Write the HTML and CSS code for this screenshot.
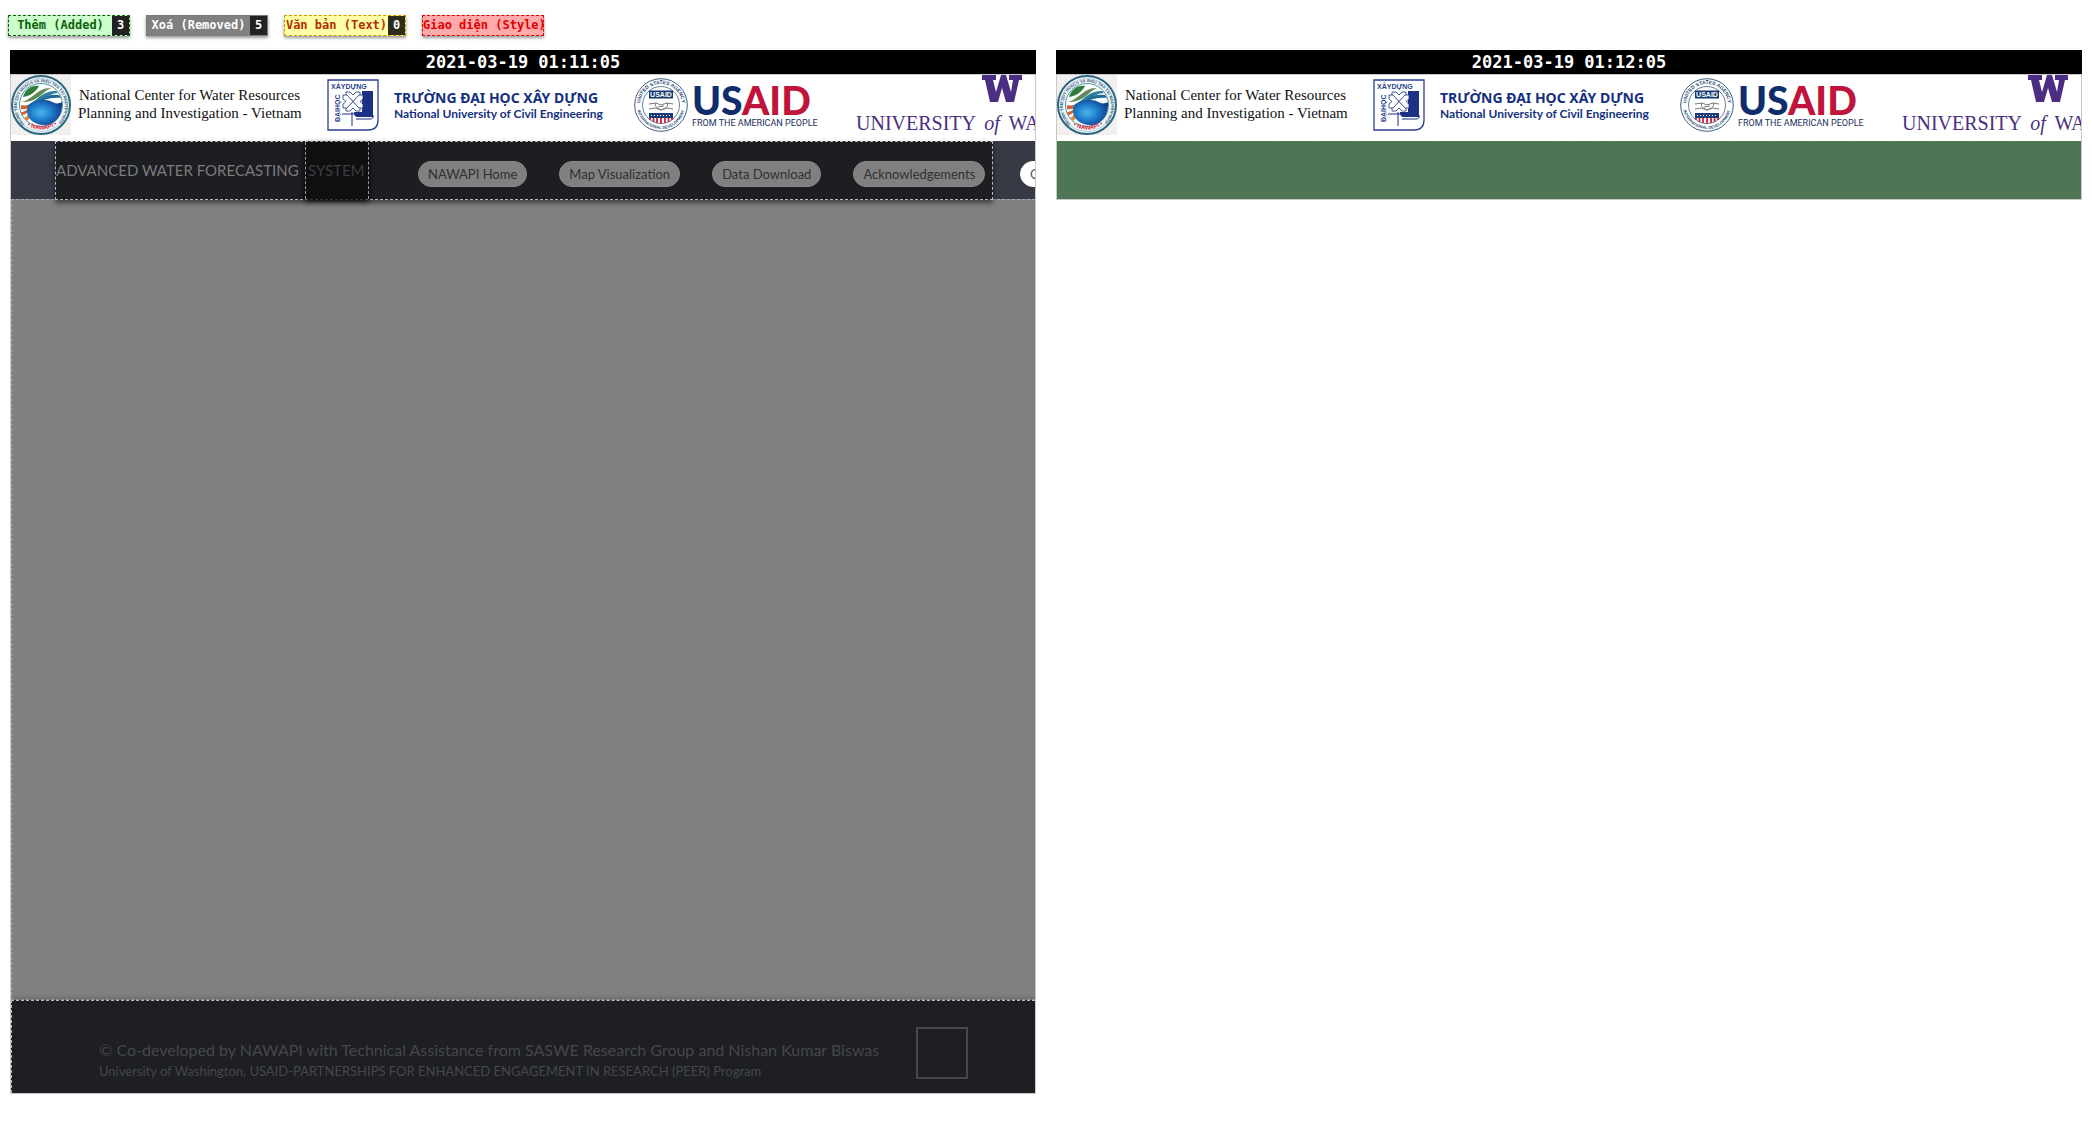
FILE: index.html
```html
<!DOCTYPE html>
<html lang="vi">
<head>
<meta charset="utf-8">
<title>2021-03-19 01:11:05 / 2021-03-19 01:12:05</title>
<link rel="stylesheet" href="styles.css">
</head>
<body>
<div class="legend">
  <button class="tag added"><span class="tag-label">Thêm (Added)</span><span class="count">3</span></button>
  <button class="tag removed"><span class="tag-label">Xoá (Removed)</span><span class="count">5</span></button>
  <button class="tag text"><span class="tag-label">Văn bản (Text)</span><span class="count">0</span></button>
  <button class="tag style"><span class="tag-label">Giao diện (Style)</span></button>
</div>

<main class="compare">
  <section class="pane">
    <h2 class="stamp">2021-03-19 01:11:05</h2>
    <div class="frame">
      <header class="banner">
        <svg class="logo-nawapi" viewBox="0 0 60 60">
          <defs>
            <radialGradient id="ball" cx="40%" cy="50%" r="60%">
              <stop offset="0" stop-color="#4ab4ea"/><stop offset=".5" stop-color="#1f7fcb"/><stop offset="1" stop-color="#123f92"/>
            </radialGradient>
            <path id="nawapiArc" d="M14 49 A24 24 0 1 1 47 48"/>
            <path id="nawapiLow" d="M14 49 A27 27 0 0 0 48 48"/>
          </defs>
          <g id="nawapi">
            <rect width="60" height="60" fill="#f4efef"/>
            <circle cx="30" cy="30" r="29" fill="#eef6f8" stroke="#2b6780" stroke-width="2"/>
            <circle cx="30" cy="30" r="26.5" fill="none" stroke="#8fb6c4" stroke-width=".6"/>
            <circle cx="30" cy="30" r="21.5" fill="#fff" stroke="#4d95a8" stroke-width="1"/>
            <text class="seal-text" fill="#3c5577"><textPath href="#nawapiArc">TRUNG TÂM QUY HOẠCH VÀ ĐIỀU TRA TÀI NGUYÊN NƯỚC QUỐC GIA</textPath></text>
            <text class="seal-name" fill="#d8283c"><textPath href="#nawapiLow" startOffset="50%" text-anchor="middle">• NAWAPI •</textPath></text>
            <path d="M12 22C14 15 20 10 28 11C25 17 19 21 12 22Z" fill="#2f7d3b"/>
            <path d="M10 27C20 26 27 12 40 13C33 15 27 28 10 27Z" fill="#5f8a55"/>
            <path d="M11 31C24 31 29 15 45 16L47 18C35 18 29 33 11 31Z" fill="#2c7da0"/>
            <path d="M20 29C28 27 34 18 48 20L50 23C38 22 32 26 20 29Z" fill="#1f6c94"/>
            <path d="M10 30C14 31 18 31 22 30C18 34 13 35 10 34Z" fill="#d2642f"/>
            <path d="M10 37C13 37 16 35 18 33L17 37C15 39 13 40 11 40Z" fill="#d2642f"/>
            <path d="M13 43C15 42 16 41 17 39L19 43L16 46Z" fill="#e08b3c"/>
            <path d="M16 34C17 27 26 25 34 25C42 25 43 31 51 27C52 43 42 50 33 50C23 50 15 43 16 34Z" fill="url(#ball)"/>
          </g>
        </svg>
        <p class="center-name">National Center for Water Resources<br>Planning and Investigation - Vietnam</p>
        <svg class="logo-nuce" viewBox="0 0 52 52">
          <g id="nuce">
            <path d="M1 1H51V41Q51 51 41 51H1Z" fill="#fff" stroke="#2a3f92" stroke-width="1.3"/>
            <path d="M27 12H46V38H31C28 38 27 36 27 33Z" fill="#1b3184"/>
            <path d="M15 35H30M25 23V47M29 40H43Q47 40 46 36" fill="none" stroke="#1b3184" stroke-width="1"/>
            <path d="M17 12H35V33H17Z" fill="#fff"/>
            <g fill="#fff" stroke="#1b3184" stroke-width=".8">
              <path d="M26 22.500L19 16V13H23L26 16L29 13H33V16Z"/>
              <path d="M26 22.500L19 29V32H23L26 29L29 32H33V29Z"/>
              <path d="M26 22.500L20 16H16V20L19 22.500L16 25V29H20Z"/>
              <path d="M26 22.500L32 16H36V20L33 22.500L36 25V29H32Z"/>
            </g>
            <text class="nuce-text" x="4" y="10" fill="#2a3f92">XÂYDỰNG</text>
            <text class="nuce-text" transform="translate(13 43) rotate(-90)" fill="#2a3f92">ĐẠIHỌC</text>
          </g>
        </svg>
        <p class="nuce-name"><b>TRƯỜNG ĐẠI HỌC XÂY DỰNG</b><span>National University of Civil Engineering</span></p>
        <svg class="logo-seal" viewBox="0 0 54 54">
          <defs>
            <path id="usArc" d="M6 27 A21 21 0 0 1 48 27"/>
            <path id="usLow" d="M3 27 A24 24 0 0 0 51 27"/>
          </defs>
          <g id="seal">
            <circle cx="27" cy="27" r="26.3" fill="#fff" stroke="#3d5f86" stroke-width="1"/>
            <circle cx="27" cy="27" r="18.5" fill="#fff" stroke="#3d5f86" stroke-width=".8"/>
            <text class="us-text" fill="#2d4b78"><textPath href="#usArc" startOffset="50%" text-anchor="middle">UNITED STATES AGENCY</textPath></text>
            <text class="us-low" fill="#2d4b78"><textPath href="#usLow" startOffset="50%" text-anchor="middle">INTERNATIONAL DEVELOPMENT</textPath></text>
            <rect x="15" y="12.500" width="24" height="8" fill="#123a70"/>
            <text class="us-name" x="27" y="19" text-anchor="middle" fill="#fff">USAID</text>
            <path d="M15 26L22 25L27 27L33 25L39 26M15 31L21 30L27 32L33 30L39 31M22 25C20 28 23 30 27 32M33 25C35 28 32 30 27 32M24 29L30 28" fill="none" stroke="#777" stroke-width="1"/>
            <path d="M15 35H39V40H15Z" fill="#1b3b74"/>
            <path d="M17 37.500H38" stroke="#fff" stroke-width="1" stroke-dasharray="1 2"/>
            <path d="M16 40V42M19.500 40V44M23 40V45M27 40V46M31 40V45M34.500 40V44M38 40V42" stroke="#c8243f" stroke-width="1.800"/>
          </g>
        </svg>
        <p class="usaid"><b>US<i>AID</i></b><span>FROM THE AMERICAN PEOPLE</span></p>
        <div class="uw">
          <svg class="logo-uw" viewBox="0 0 40 27"><path id="uw" d="M0 0H14V5H11L14 17L19 0H24L29 17L31 5H27V0H40V5H37L32 27H24L20 13L16 27H8L3 5H0Z" fill="#4b2e83"/></svg>
          <p>UNIVERSITY <em>of</em> WASHINGTON</p>
        </div>
      </header>
      <nav class="nav">
        <div class="nav-removed">
          <span class="title">ADVANCED WATER FORECASTING</span>
          <span class="title system">SYSTEM</span>
          <div class="links">
            <a class="pill" href="#">NAWAPI Home</a>
            <a class="pill" href="#">Map Visualization</a>
            <a class="pill" href="#">Data Download</a>
            <a class="pill" href="#">Acknowledgements</a>
          </div>
        </div>
        <a class="pill live" href="#">Contact</a>
      </nav>
      <div class="body-removed"></div>
      <footer class="footer">
        <div class="credits">
          <p class="credit-main">© Co-developed by NAWAPI with Technical Assistance from SASWE Research Group and Nishan Kumar Biswas</p>
          <p class="credit-sub">University of Washington, USAID-PARTNERSHIPS FOR ENHANCED ENGAGEMENT IN RESEARCH (PEER) Program</p>
        </div>
        <a class="to-top" href="#" aria-label="Top"></a>
      </footer>
    </div>
  </section>

  <section class="pane">
    <h2 class="stamp">2021-03-19 01:12:05</h2>
    <div class="frame">
      <header class="banner">
        <svg class="logo-nawapi" viewBox="0 0 60 60"><use href="#nawapi"/></svg>
        <p class="center-name">National Center for Water Resources<br>Planning and Investigation - Vietnam</p>
        <svg class="logo-nuce" viewBox="0 0 52 52"><use href="#nuce"/></svg>
        <p class="nuce-name"><b>TRƯỜNG ĐẠI HỌC XÂY DỰNG</b><span>National University of Civil Engineering</span></p>
        <svg class="logo-seal" viewBox="0 0 54 54"><use href="#seal"/></svg>
        <p class="usaid"><b>US<i>AID</i></b><span>FROM THE AMERICAN PEOPLE</span></p>
        <div class="uw">
          <svg class="logo-uw" viewBox="0 0 40 27"><use href="#uw"/></svg>
          <p>UNIVERSITY <em>of</em> WASHINGTON</p>
        </div>
      </header>
      <div class="nav-added"></div>
    </div>
  </section>
</main>
</body>
</html>
```
FILE: styles.css
```css
* { box-sizing: border-box; }
body { margin: 0; background: #fff; font-family: Lato, sans-serif; }
p, h2 { margin: 0; }

.legend { display: flex; gap: 16px; padding: 15px 8px 14px; }
.tag {
  display: flex; align-items: stretch; width: 122px; height: 21px; padding: 0;
  border: 1px dashed; box-shadow: 0 2px 3px rgba(0, 0, 0, .4);
  font: bold 12px/19px "DejaVu Sans Mono", monospace; white-space: nowrap;
}
.tag-label { flex: 1; text-align: center; }
.count { width: 17px; background: #222; color: #fff; }
.added { background: #cfc; color: #0a600a; }
.removed { background: #808080; color: #fff; border-color: #777; }
.text { background: #ffa; color: #b03000; border-color: #c90; }
.text .count { background: #2c2c1c; }
.style { background: #faa; color: #e00000; }

.compare { display: grid; grid-template-columns: 1fr 1fr; gap: 20px; padding: 0 10px; align-items: start; }
.pane { min-width: 0; }
.stamp { background: #000; color: #fff; text-align: center; font: bold 17px/24px "DejaVu Sans Mono", monospace; }
.frame { border: 1px solid #c8c8c8; overflow: hidden; }

.banner { display: flex; align-items: flex-start; height: 66px; background: #fff; white-space: nowrap; }
.banner > * { flex: none; }
.logo-nawapi { width: 60px; height: 60px; }
.center-name { width: 256px; padding: 11px 26px 0 7px; font: 15px/18px "Liberation Serif", serif; color: #111; text-align: center; }
.logo-nuce { width: 52px; height: 52px; margin-top: 4px; }
.nuce-name { display: flex; flex-direction: column; width: 255px; padding: 13px 0 0 15px; color: #14307f; font-weight: bold; }
.nuce-name b { font: bold 14px/20px "Noto Sans", sans-serif; }
.nuce-name span { font: bold 12px/12px Lato, sans-serif; }
.logo-seal { width: 54px; height: 54px; margin-top: 3px; }
.usaid { display: flex; flex-direction: column; width: 168px; padding: 7px 0 0 4px; }
.usaid b { font: 900 39px/36px Lato, sans-serif; color: #0f2c6b; }
.usaid i { font-style: normal; color: #c0143c; }
.usaid span { font: 9px/10px Roboto, sans-serif; color: #222f5c; }
.uw { color: #4b2e83; font: 20px/24px "Liberation Serif", serif; }
.uw em { margin: 0 4px; }
.logo-uw { display: block; width: 40px; height: 27px; margin-left: 126px; }
.uw p { padding-top: 9px; }
.seal-text { font: bold 4px "Liberation Sans", sans-serif; }
.seal-name { font: bold 6px "Liberation Sans", sans-serif; }
.nuce-text { font: bold 7px "Liberation Sans", sans-serif; }
.us-text { font: bold 5px "Liberation Sans", sans-serif; }
.us-low { font: bold 4px "Liberation Sans", sans-serif; }
.us-name { font: bold 7px "Liberation Sans", sans-serif; }

.nav { display: flex; align-items: flex-start; height: 58px; padding-left: 44px; background: #373a45; white-space: nowrap; }
.nav-removed {
  display: flex; flex: none; width: 938px; height: 59px; position: relative;
  background: #1c1e22; border: 1px dashed #bbb; box-shadow: 0 3px 5px rgba(0, 0, 0, .5);
}
.title { flex: none; width: 249px; color: #7b7b7b; font-size: 15px; line-height: 57px; }
.system { width: 64px; padding-left: 2px; background: #0e0f11; border: dashed #999; border-width: 0 1px; color: #3e3e3e; box-shadow: 0 2px 5px #000; }
.links { display: flex; gap: 32px; padding-left: 49px; }
.pill {
  flex: none; height: 26px; margin-top: 19px; padding: 0 9px; border: 1px solid #8a8a8a; border-radius: 13px;
  background: #808080; color: #303030; font-size: 13px; line-height: 24px; text-decoration: none;
}
.live { margin: 20px 0 0 27px; background: #fff; border-color: #fff; color: #555; }
.body-removed { height: 801px; background: #808080; border: 1px dashed #a8a8a8; border-right: 0; }
.footer {
  display: flex; align-items: flex-start; justify-content: space-between; height: 93px; padding: 26px 67px 0 87px;
  background: #1d1f23; border: dashed #bbb; border-width: 1px 0 0 1px; box-shadow: 0 -2px 5px rgba(0, 0, 0, .2); color: #46474a; white-space: nowrap;
}
.credits { padding-top: 12px; }
.credit-main { font-size: 16px; line-height: 22px; }
.credit-sub { font-size: 13px; line-height: 20px; }
.to-top { width: 52px; height: 52px; border: 2px solid #46474a; }
.nav-added { height: 58px; background: #4e7554; border-top: 1px dashed #3b8b45; }
```
